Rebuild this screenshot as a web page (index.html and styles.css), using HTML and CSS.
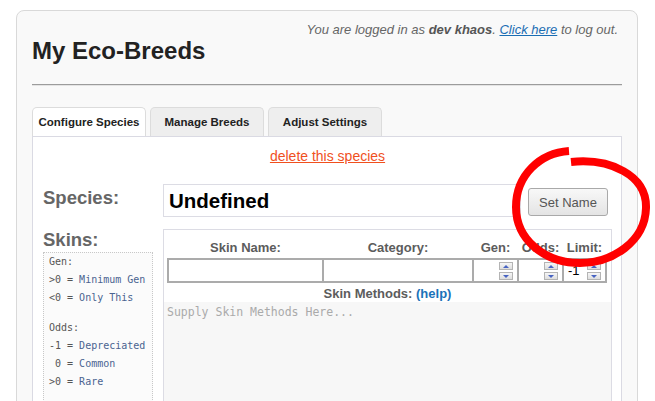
FILE: index.html
```html
<!DOCTYPE html>
<html>
<head>
<meta charset="utf-8">
<title>My Eco-Breeds</title>
<link rel="stylesheet" href="styles.css">
</head>
<body>
<div class="page">
  <div class="login">You are logged in as <b>dev khaos</b>. <a href="#">Click here</a> to log out.</div>
  <h1 class="title">My Eco-Breeds</h1>
  <div class="rule"></div>
  <div class="tabs">
    <div class="tab active">Configure Species</div>
    <div class="tab">Manage Breeds</div>
    <div class="tab">Adjust Settings</div>
  </div>
  <div class="panel">
    <div class="delete"><a href="#">delete this species</a></div>
    <div class="species-row">
      <div class="label">Species:</div>
      <input class="name-field" type="text" value="Undefined">
      <button class="btn">Set Name</button>
    </div>
    <div class="skins-row">
      <div class="skins-side">
        <div class="label">Skins:</div>
        <div class="legend">
          <div class="group">
            <div class="line k">Gen:</div>
            <div class="line"><span class="k">&gt;0 = </span><span class="v">Minimum Gen</span></div>
            <div class="line"><span class="k">&lt;0 = </span><span class="v">Only This</span></div>
          </div>
          <div class="group">
            <div class="line k">Odds:</div>
            <div class="line"><span class="k">-1 = </span><span class="v">Depreciated</span></div>
            <div class="line"><span class="k"> 0 = </span><span class="v">Common</span></div>
            <div class="line"><span class="k">&gt;0 = </span><span class="v">Rare</span></div>
          </div>
        </div>
      </div>
      <div class="skins-box">
        <div class="skins-inner">
          <div class="cols heads">
            <div>Skin Name:</div>
            <div>Category:</div>
            <div>Gen:</div>
            <div>Odds:</div>
            <div>Limit:</div>
          </div>
          <div class="cols inputs">
            <div class="cell"></div>
            <div class="cell"></div>
            <div class="cell num"><span class="spin"><i class="up"></i><i class="down"></i></span></div>
            <div class="cell num"><span class="spin"><i class="up"></i><i class="down"></i></span></div>
            <div class="cell num"><span class="val">-1</span><span class="spin"><i class="up"></i><i class="down"></i></span></div>
          </div>
          <div class="methods">Skin Methods: <a href="#">(help)</a></div>
        </div>
        <textarea class="methods-text" placeholder="Supply Skin Methods Here..."></textarea>
      </div>
    </div>
  </div>
</div>
<svg class="marker" width="655" height="401" viewBox="0 0 655 401">
  <path d="M571,162 C610,158 647,175 646,208 C645,242 612,263 580,263 C545,263 516,240 516,207 C516,175 540,153 569,151" fill="none" stroke="#ff0000" stroke-width="8"/>
</svg>
</body>
</html>
```

FILE: styles.css
```css
* { box-sizing: border-box; }
body {
  margin: 0;
  background: #fff;
  font-family: "Liberation Sans", Arial, sans-serif;
  overflow: hidden;
}
.page {
  margin: 10px 0 0 16px;
  width: 622px;
  min-height: 440px;
  border: 1px solid #d9d9d9;
  border-radius: 8px;
  background: #f9f9f9;
  padding: 11px 15px 0 15px;
}
.login {
  text-align: right;
  font-size: 13px;
  line-height: 15px;
  font-style: italic;
  color: #666;
  padding-right: 4px;
}
.login b { color: #555; }
.login a { color: #1a6db3; }
.title {
  margin: 0;
  font-size: 24px;
  line-height: 28px;
  font-weight: bold;
  color: #222;
}
.rule {
  margin-top: 19px;
  border-top: 1px solid #9c9c9c;
  border-bottom: 1px solid #e4e4e4;
}
.tabs {
  display: flex;
  gap: 4px;
  margin-top: 21px;
}
.tab {
  width: 114px;
  height: 29px;
  border: 1px solid #dcdcdc;
  border-bottom: 0;
  border-radius: 5px 5px 0 0;
  background: #eee;
  font-size: 11.5px;
  font-weight: bold;
  color: #222;
  text-align: center;
  line-height: 28px;
}
.tab.active { background: #fff; }
.panel {
  width: 590px;
  min-height: 300px;
  border: 1px solid #dadae3;
  background: #fff;
  padding: 11px 9px 0 10px;
}
.delete {
  text-align: center;
  font-size: 14px;
  line-height: 16px;
}
.delete a { color: #f0501e; }
.species-row {
  display: flex;
  align-items: flex-start;
  margin-top: 20px;
}
.label {
  width: 120px;
  flex: none;
  font-size: 18.5px;
  line-height: 22px;
  font-weight: bold;
  color: #666;
}
.species-row .label { margin-top: 3px; }
.name-field {
  width: 358px;
  height: 33px;
  border: 1px solid #dcdce4;
  padding: 0 5px;
  font-family: "Liberation Sans", Arial, sans-serif;
  font-size: 20.5px;
  font-weight: bold;
  color: #000;
  background: #fff;
  outline: none;
}
.btn {
  margin: 4px 0 0 7px;
  width: 80px;
  height: 28px;
  border: 1px solid #a9a9a9;
  border-radius: 3px;
  background: linear-gradient(#f8f8f8, #e4e4e4);
  font-family: "Liberation Sans", Arial, sans-serif;
  font-size: 13px;
  color: #555;
  padding: 0;
}
.skins-row {
  display: flex;
  align-items: flex-start;
  margin-top: 12px;
}
.skins-side {
  width: 120px;
  flex: none;
}
.skins-side .label { height: 23px; }
.legend {
  width: 110px;
  min-height: 170px;
  border: 1px dotted #c8c8c8;
  background: #fbfbfb;
  padding: 0 5px;
  font-family: "DejaVu Sans Mono", monospace;
  font-size: 10px;
  line-height: 17.8px;
}
.line { white-space: pre; }
.group + .group { margin-top: 13px; }
.k { color: #555; }
.v { color: #4a6390; }
.skins-box {
  width: 449px;
  border: 1px solid #dcdce4;
  background: #fff;
}
.skins-inner { padding: 10px 3px 0 3px; }
.cols {
  display: grid;
  grid-template-columns: 153px 148px 43px 43px 41px;
  column-gap: 2px;
  width: 440px;
}
.heads {
  padding: 0 2px;
  font-size: 13px;
  line-height: 15px;
  font-weight: bold;
  color: #5c5c5c;
  text-align: center;
}
.inputs {
  margin-top: 3px;
  padding: 2px;
  row-gap: 2px;
  background: #ababab;
}
.cell {
  height: 21px;
  background: #fff;
}
.num {
  display: flex;
  align-items: flex-start;
  justify-content: flex-end;
}
.val {
  margin-right: auto;
  padding-left: 4px;
  font-size: 13px;
  line-height: 21px;
  color: #000;
}
.spin {
  display: flex;
  flex-direction: column;
  gap: 2px;
  margin: 2px 4px 0 0;
}
.spin i {
  display: flex;
  align-items: center;
  justify-content: center;
  width: 14px;
  height: 8px;
  border: 1px solid #b4b4b4;
  background: linear-gradient(#f6f6f6, #dedede);
}
.spin i::after {
  content: "";
  width: 0;
  height: 0;
  border-left: 3px solid transparent;
  border-right: 3px solid transparent;
}
.spin .up::after { border-bottom: 3px solid #4763c2; }
.spin .down::after { border-top: 3px solid #4763c2; }
.methods {
  margin-top: 3px;
  text-align: center;
  font-size: 13px;
  line-height: 15px;
  font-weight: bold;
  color: #5c5c5c;
}
.methods a {
  color: #1b72b9;
  text-decoration: none;
}
.methods-text {
  display: block;
  width: 447px;
  height: 140px;
  margin-top: 1px;
  border: 0;
  background: #f7f7f7;
  padding: 3px 3px;
  font-family: "DejaVu Sans Mono", monospace;
  font-size: 11.5px;
  line-height: 14px;
  resize: none;
  outline: none;
}
.methods-text::placeholder { color: #aaa; }
.marker {
  position: absolute;
  left: 0;
  top: 0;
  pointer-events: none;
}
```
